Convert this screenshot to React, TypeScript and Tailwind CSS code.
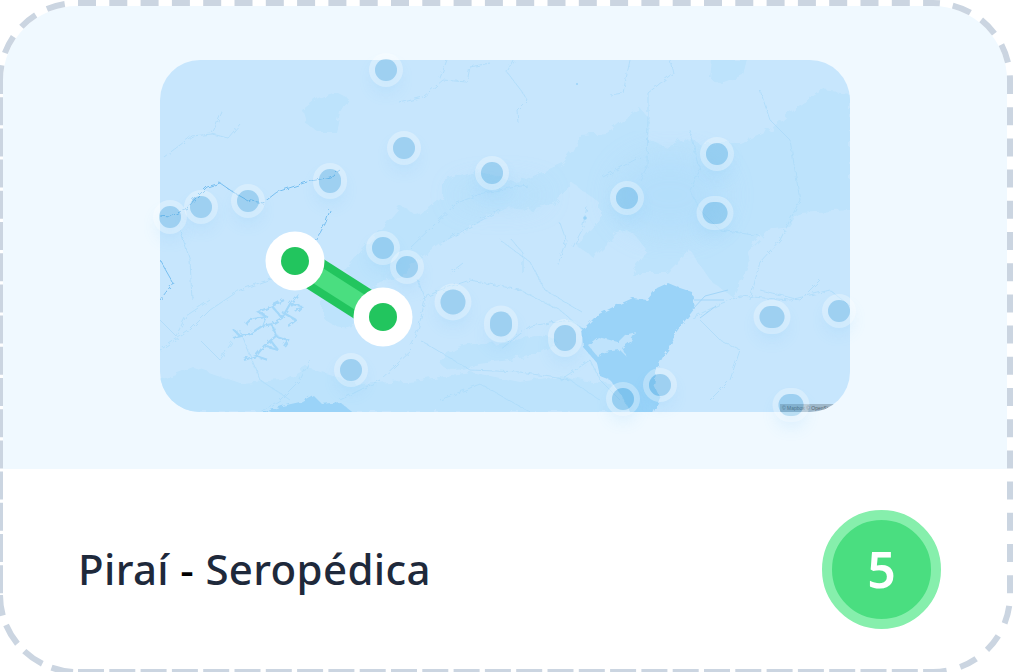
const pins = [
  { x: 386, y: 70, w: 22, h: 22 },
  { x: 404, y: 148, w: 22, h: 22 },
  { x: 330, y: 181, w: 22, h: 24 },
  { x: 492, y: 173, w: 22, h: 22 },
  { x: 717, y: 154, w: 22, h: 22 },
  { x: 627, y: 198, w: 22, h: 22 },
  { x: 715, y: 213, w: 25, h: 22 },
  { x: 170, y: 217, w: 22, h: 22 },
  { x: 201, y: 207, w: 22, h: 22 },
  { x: 248, y: 201, w: 22, h: 22 },
  { x: 383, y: 248, w: 22, h: 22 },
  { x: 407, y: 267, w: 22, h: 22 },
  { x: 453, y: 302, w: 25, h: 25 },
  { x: 501, y: 324, w: 22, h: 25 },
  { x: 565, y: 338, w: 22, h: 26 },
  { x: 772, y: 317, w: 25, h: 22 },
  { x: 839, y: 311, w: 22, h: 22 },
  { x: 351, y: 370, w: 22, h: 22 },
  { x: 623, y: 399, w: 22, h: 22 },
  { x: 660, y: 385, w: 22, h: 22 },
  { x: 791, y: 405, w: 25, h: 22 },
];

const terrain = [
  'M345 270 L362 250 L375 236 L400 207 L420 215 L443 197 L443 180 L477 170 L517 183 L563 163 L573 150 L580 135 L607 133 L627 117 L640 108 L650 120 L648 140 L667 148 L683 138 L700 143 L740 143 L772 128 L800 103 L820 90 L850 93 L850 210 L800 213 L790 227 L767 230 L747 253 L750 262 L733 297 L712 282 L690 250 L667 273 L630 273 L647 250 L633 233 L620 230 L593 257 L578 247 L600 220 L600 203 L572 183 L555 203 L527 210 L507 208 L443 242 L420 260 L400 275 L365 290 Z',
  'M160 380 L193 367 L240 383 L283 380 L307 367 L360 384 L420 380 L470 372 L520 382 L560 376 L610 384 L640 412 L160 412 Z',
  'M440 362 C450 346 470 340 492 344 C520 340 546 330 556 340 C546 358 506 360 478 364 C458 372 444 372 440 362 Z',
  'M322 300 C340 296 356 306 360 320 C350 332 330 328 322 316 Z',
  'M302 110 L318 98 L336 92 L348 98 L340 112 L336 132 L318 132 L306 124 Z',
  'M712 60 L748 60 L744 76 L722 84 L710 78 Z',
];

const rivers = [
  'M160 216 L170 217 L187 208 L196 198 L207 187 L220 183 L233 192 L247 200 L263 203 L277 192 L307 182 L330 177 L340 170',
  'M330 210 L326 222 L320 233 L312 244',
  'M160 260 L173 283 L160 300',
];

const thinLines = [
  'M160 160 L176 148 L192 136 L212 134 L222 112',
  'M212 134 L228 138 L240 124',
  'M447 60 L440 78',
  'M400 103 L423 97 L443 80 L467 82 L470 67 L490 63',
  'M507 72 L523 93 L527 100 L517 110 L518 123',
  'M513 60 L507 72',
  'M630 60 L623 93 L610 95',
  'M673 73 L648 93 L648 117 L647 167 L640 180',
  'M670 60 L673 73',
  'M410 248 L457 203 L483 193 L527 185',
  'M640 157 L603 177',
  'M443 242 L500 210',
  'M560 223 L566 240 L557 267',
  'M587 207 L582 230 L573 247',
  'M510 238 L523 253 L523 273',
  'M450 273 L463 263',
  'M700 170 L690 190 L700 210 L720 230 L760 236',
  'M760 90 L770 120 L790 140 L800 200 L780 240 L760 262 L750 300',
  'M692 318 L720 304 L740 296 L790 300 L830 290 L850 306',
  'M700 320 L720 340 L740 350 L730 380 L710 400',
  'M160 350 L190 330 L210 310 L240 290 L262 282 L300 270',
  'M200 340 L220 360 L240 330 L260 380 L290 400',
  'M420 300 L440 290 L470 280 L520 290 L560 310 L583 330',
  'M500 240 L530 262 L545 290 L582 312',
  'M420 340 L470 370 L520 372 L570 380 L600 400',
  'M410 345 L418 330 L425 300 L418 280',
  'M412 350 L380 380 L340 400',
  'M310 360 L300 380 L280 400 L260 412',
  'M440 400 L480 384 L530 412',
  'M600 340 L570 320 L530 326 L500 350',
  'M160 320 L176 336 L186 316 L210 300',
  'M180 230 L190 260 L192 300',
  'M620 400 L600 380 L590 360 L560 380',
  'M690 130 L700 170',
  'M760 290 L800 300 L820 280',
];

const reservoir = [
  'M233 338 L250 334 L262 326 L272 324 L282 318 L290 304 L298 294',
  'M262 326 L266 316 L258 312 L272 306 L282 318',
  'M272 324 L276 336 L264 346 L256 356 L244 360',
  'M276 336 L288 340 L284 346',
  'M250 334 L240 336 M266 316 L252 318 M290 304 L302 306 M282 312 L296 320',
  'M272 306 L284 300 M264 346 L278 350 M256 356 L268 360',
  'M240 336 L234 330 M252 318 L246 324 M296 320 L288 326 M302 306 L296 312 M278 350 L270 340',
];

export default function App() {
  return (
    <div className="relative h-[672px] w-[1013px] overflow-hidden bg-white font-['Noto_Sans',sans-serif]">
      <div className="-ml-[3px] flex h-[675px] w-[1016px] flex-col overflow-hidden rounded-[80px] border-[6px] border-transparent bg-white [background-clip:padding-box]">
        <div className="flex h-[463px] shrink-0 justify-center bg-[#f0f9ff] pt-[54px]">
          <div className="relative h-[352px] w-[690px]">
            <div className="relative h-full w-full overflow-hidden rounded-[40px] bg-[#c7e6fd]">
              <svg viewBox="160 60 690 352" className="h-full w-full" fill="none">
                <defs>
                  <filter id="rough" x="-5%" y="-5%" width="110%" height="110%">
                    <feTurbulence type="fractalNoise" baseFrequency="0.1" numOctaves="3" seed="4" />
                    <feDisplacementMap in="SourceGraphic" scale="9" />
                  </filter>
                  <filter id="wiggle" x="-5%" y="-5%" width="110%" height="110%">
                    <feTurbulence type="fractalNoise" baseFrequency="0.2" numOctaves="2" seed="9" />
                    <feDisplacementMap in="SourceGraphic" scale="5" />
                  </filter>
                  <filter id="soft" x="-30%" y="-30%" width="160%" height="160%">
                    <feGaussianBlur stdDeviation="14" />
                  </filter>
                </defs>
                <g filter="url(#rough)">
                  {terrain.map((d, i) => <path key={i} d={d} fill="#bde3fc" />)}
                </g>
                <g filter="url(#soft)" fill="#b1ddfb" opacity="0.7">
                  <ellipse cx="670" cy="195" rx="55" ry="40" />
                  <ellipse cx="500" cy="195" rx="45" ry="10" />
                </g>
                <g filter="url(#wiggle)" strokeWidth="0.7" stroke="#a9daf9">
                  {thinLines.map((d, i) => <path key={i} d={d} />)}
                </g>
                <g filter="url(#wiggle)" strokeWidth="1" stroke="#78bff0">
                  {rivers.map((d, i) => <path key={i} d={d} />)}
                </g>
                <g filter="url(#wiggle)" strokeWidth="2.2" stroke="#a3d7f9">
                  {reservoir.map((d, i) => <path key={i} d={d} />)}
                </g>
                <g filter="url(#wiggle)">
                  <path
                    d="M668 283 L680 288 L692 292 L695 308 L680 327 L672 338 L673 343 L663 357 L657 368 L654 385 L660 398 L652 416 L632 416 L622 396 L610 380 L600 376 L597 363 L583 347 L582 330 L597 315 L615 306 L633 298 L647 300 L657 288 Z"
                    fill="#9ad3f8"
                  />
                  <path d="M588 345 L598 337 L610 340 L618 342 L625 335 L636 332 L630 342 L622 348 L628 358 L620 350 L604 352 L597 356 Z" fill="#bfe3fc" />
                  <path d="M253 416 L282 406 L300 402 L313 395 L322 404 L340 402 L357 416 Z" fill="#9ad3f8" />
                </g>
                <path d="M692 310 L705 296 L728 290 M694 300 L724 300 M700 318 L716 306" stroke="#a3d6f9" strokeWidth="1" />
                <circle cx="585" cy="218" r="1.8" fill="#9ad3f8" />
                <circle cx="577" cy="84" r="1" fill="#9ad3f8" />
              </svg>
              <div className="absolute bottom-0 right-0 flex h-[8px] w-[70px] items-center overflow-hidden whitespace-nowrap bg-black/20 pl-[2px] font-['Liberation_Sans',sans-serif] text-[5px] leading-none text-black/50">
                © Mapbox © OpenStreetMap
              </div>
            </div>

            {pins.map((p, i) => (
              <div
                key={i}
                className="absolute -translate-x-1/2 -translate-y-1/2 rounded-full bg-[#3fa0d8]/30 shadow-[0_9px_18px_rgba(90,185,245,0.2)] ring-[6px] ring-white/30"
                style={{ left: p.x - 160, top: p.y - 60, width: p.w, height: p.h }}
              />
            ))}

            <svg viewBox="160 60 690 352" className="absolute inset-0 h-full w-full overflow-visible">
              <line x1="295" y1="261" x2="383" y2="317" stroke="#22c55e" strokeWidth="34" />
              <line x1="295" y1="261" x2="383" y2="317" stroke="#4ade80" strokeWidth="18" />
              <circle cx="295" cy="261" r="29.5" fill="#ffffff" />
              <circle cx="295" cy="261" r="14" fill="#22c55e" />
              <circle cx="383" cy="317" r="29.5" fill="#ffffff" />
              <circle cx="383" cy="317" r="14" fill="#22c55e" />
            </svg>
          </div>
        </div>

        <div className="flex flex-1 items-center justify-between pl-[75px] pr-[66px]">
          <h1 className="text-[42px] font-medium leading-none tracking-[0.35px] text-[#1e293b]">
            Piraí <span className="text-black">-</span> Seropédica
          </h1>
          <div className="flex h-[119px] w-[119px] items-center justify-center rounded-full border-[10px] border-[#86efac] bg-[#4ade80] text-[50px] font-semibold leading-none text-white">
            5
          </div>
        </div>
      </div>

      {/* dashed frame, sides have their own dash phase */}
      <svg width="1013" height="672" className="pointer-events-none absolute inset-0" fill="none" stroke="#cbd5e1" strokeWidth="6">
        <path d="M77 3 H933" strokeDasharray="18 13.3" strokeDashoffset="30.3" />
        <path d="M933 3 A77 77 0 0 1 1010 80" strokeDasharray="19 13" strokeDashoffset="12" />
        <path d="M1010 80 V595" strokeDasharray="18 13.2" strokeDashoffset="4" />
        <path d="M1010 595 A77 77 0 0 1 933 672" strokeDasharray="18 14" strokeDashoffset="21" />
        <path d="M78 672 H933" strokeDasharray="26 5.3" />
        <path d="M77 672 A77 77 0 0 1 0 595" strokeDasharray="22 10" strokeDashoffset="28" />
        <path d="M0 80 V595" strokeDasharray="28 3.2" strokeDashoffset="14" />
        <path d="M0 80 A77 77 0 0 1 77 3" strokeDasharray="18.5 12.7" strokeDashoffset="3.7" />
      </svg>
    </div>
  );
}
